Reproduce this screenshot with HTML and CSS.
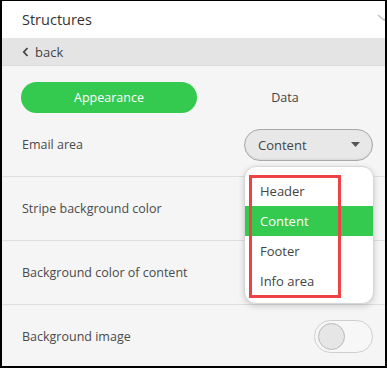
FILE: index.html
```html
<!DOCTYPE html>
<html>
<head>
<meta charset="utf-8">
<link rel="stylesheet" href="styles.css">
</head>
<body>
<div class="frame">
  <div class="header">
    <span class="title">Structures</span>
    <svg class="hdr-chev" width="14" height="8" viewBox="0 0 14 8"><path d="M1 1 L7 6 L13 1" fill="none" stroke="#bfc3c8" stroke-width="1.6"/></svg>
  </div>
  <div class="backbar">
    <svg class="back-chev" width="7" height="10" viewBox="0 0 7 10"><path d="M5.5 1 L1.8 5 L5.5 9" fill="none" stroke="#444" stroke-width="1.8"/></svg>
    <span>back</span>
  </div>
  <div class="main">
    <div class="tabs">
      <div class="tab active">Appearance</div>
      <div class="tab">Data</div>
    </div>
    <div class="row">
      <span class="label">Email area</span>
      <div class="select">
        <span>Content</span>
        <svg width="9" height="5" viewBox="0 0 9 5"><path d="M0 0 H9 L4.5 5 Z" fill="#555"/></svg>
      </div>
    </div>
    <div class="row"><span class="label">Stripe background color</span></div>
    <div class="row"><span class="label">Background color of content</span></div>
    <div class="row last">
      <span class="label">Background image</span>
      <div class="toggle"><div class="knob"></div></div>
    </div>
    <div class="dropdown">
      <div class="item">Header</div>
      <div class="item selected">Content</div>
      <div class="item">Footer</div>
      <div class="item">Info area</div>
      <div class="highlight"></div>
    </div>
  </div>
</div>
</body>
</html>
```
FILE: styles.css
```css
html, body {
  margin: 0;
  padding: 0;
  background: #000;
}
body {
  font-family: "Open Sans", "Segoe UI", sans-serif;
  color: #444;
}
.frame {
  width: 383px;
  height: 365px;
  margin: 1px 2px 2px 2px;
  background: #f5f5f5;
  overflow: hidden;
  position: relative;
}
.header {
  height: 37px;
  background: #fff;
  display: flex;
  align-items: center;
  padding-left: 20px;
  position: relative;
}
.title {
  font-size: 14.5px;
  color: #333;
}
.hdr-chev {
  position: absolute;
  right: -6px;
  top: 13px;
}
.backbar {
  height: 27px;
  background: #e4e4e4;
  border-bottom: 1px solid #dcdcdc;
  display: flex;
  align-items: center;
  padding-left: 20px;
  font-size: 13px;
  color: #444;
  gap: 6px;
}
.main {
  position: relative;
}
.tabs {
  display: flex;
  padding: 16px 12px 0 19px;
}
.tab {
  flex: 1;
  height: 31px;
  border-radius: 16px;
  display: flex;
  align-items: center;
  justify-content: center;
  font-size: 12.5px;
  color: #444;
}
.tab.active {
  background: #34c94f;
  color: #fff;
}
.row {
  height: 63px;
  border-bottom: 1px solid #dedede;
  display: flex;
  align-items: center;
  justify-content: space-between;
  padding: 0 12px 0 20px;
  font-size: 12.5px;
}
.row.last {
  border-bottom: none;
}
.label {
  color: #4a4a4a;
}
.select {
  border: 1px solid #a9a9a9;
  border-radius: 16px;
  background: #e8e8e8;
  box-shadow: inset 0 -1px 2px rgba(0,0,0,0.08);
  display: flex;
  align-items: center;
  justify-content: space-between;
  padding: 0 12px 0 13px;
  box-sizing: border-box;
  width: 129px;
  height: 32px;
  font-size: 13px;
  color: #444;
}
.toggle {
  width: 59px;
  height: 33px;
  box-sizing: border-box;
  border: 1px solid #cfcfcf;
  border-radius: 17px;
  background: #f7f7f7;
  display: flex;
  align-items: center;
  padding-left: 3px;
}
.knob {
  width: 27px;
  height: 27px;
  border-radius: 50%;
  background: #e6e6e6;
  border: 1px solid #b9b9b9;
  box-sizing: border-box;
}
.dropdown {
  position: absolute;
  left: 242px;
  top: 100px;
  width: 130px;
  padding: 9px 0;
  background: #fff;
  border: 1px solid #d6d6d6;
  border-radius: 12px;
  box-shadow: 0 2px 6px rgba(0,0,0,0.18);
  box-sizing: border-box;
  height: 138px;
}
.item {
  height: 30px;
  display: flex;
  align-items: center;
  padding-left: 15px;
  font-size: 13px;
  color: #444;
}
.item.selected {
  background: #34c94f;
  color: #fff;
}
.highlight {
  position: absolute;
  left: 4px;
  top: 8px;
  width: 92px;
  height: 123px;
  border: 3px solid #ef4244;
  box-sizing: border-box;
}
```
